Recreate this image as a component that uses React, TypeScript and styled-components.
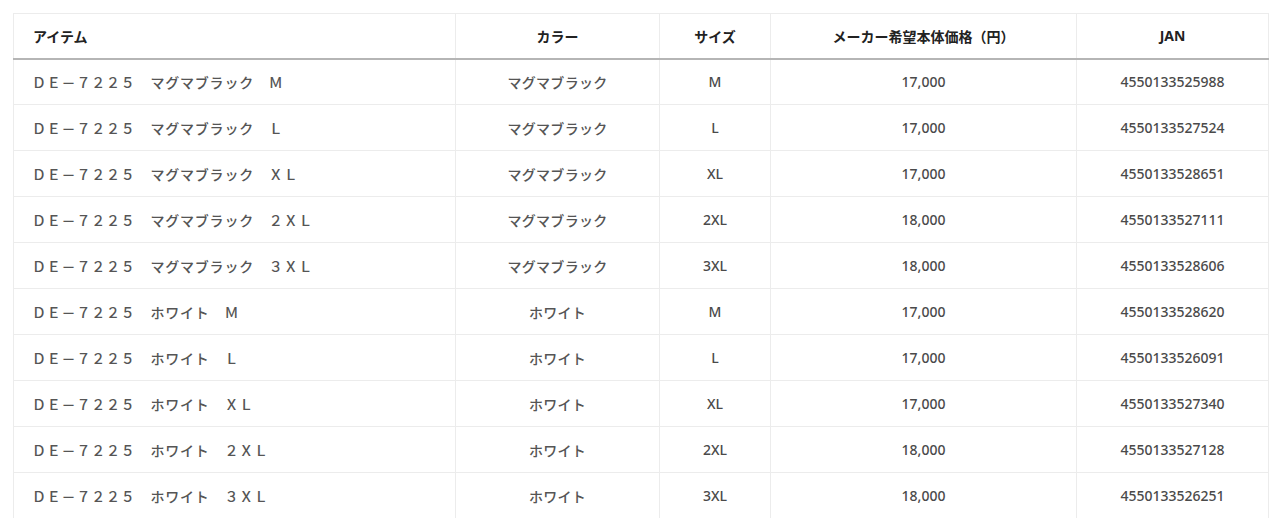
import React from "react";
import styled, { createGlobalStyle } from "styled-components";

const GlobalStyle = createGlobalStyle`
  html, body {
    margin: 0;
    padding: 0;
    background: #ffffff;
  }
  body {
    font-family: "Noto Sans", "Noto Sans CJK JP", sans-serif;
    color: #444;
  }
`;

const Page = styled.div`
  padding: 13px 12px 0 13px;
`;

const Table = styled.table`
  width: 1255px;
  border-collapse: collapse;
  table-layout: fixed;
  border: 1px solid #ececec;
`;

const HeadCell = styled.th<{ $align?: "left" | "center"; $w: number }>`
  width: ${(p) => p.$w}px;
  height: 45px;
  padding: 0 0 0 ${(p) => (p.$align === "left" ? "19px" : "0")};
  text-align: ${(p) => p.$align ?? "center"};
  font-family: "Noto Sans", "Noto Sans CJK JP", sans-serif;
  font-size: 14px;
  font-weight: 700;
  color: #222;
  border-left: 1px solid #ececec;
  border-bottom: 2px solid #b5b5b5;
  box-sizing: border-box;
`;

const Row = styled.tr`
  height: 46px;
`;

const Cell = styled.td<{ $align?: "left" | "center" }>`
  padding: 0 0 0 ${(p) => (p.$align === "left" ? "18px" : "0")};
  text-align: ${(p) => p.$align ?? "center"};
  font-family: "Noto Sans", "Noto Sans CJK JP", sans-serif;
  font-size: 14px;
  font-weight: 500;
  color: #4a4a4a;
  border-left: 1px solid #ececec;
  border-bottom: 1px solid #ececec;
  white-space: nowrap;
`;

const Jp = styled.span<{ $spacing?: number }>`
  font-family: "Noto Sans CJK JP", sans-serif;
  font-size: 14px;
  color: #555;
  letter-spacing: ${(p) => p.$spacing ?? 0.3}px;
`;

type Item = { color: string; size: string; fwSize: string; price: string; jan: string };

const rows: Item[] = [
  { color: "マグマブラック", size: "M", fwSize: "Ｍ", price: "17,000", jan: "4550133525988" },
  { color: "マグマブラック", size: "L", fwSize: "Ｌ", price: "17,000", jan: "4550133527524" },
  { color: "マグマブラック", size: "XL", fwSize: "ＸＬ", price: "17,000", jan: "4550133528651" },
  { color: "マグマブラック", size: "2XL", fwSize: "２ＸＬ", price: "18,000", jan: "4550133527111" },
  { color: "マグマブラック", size: "3XL", fwSize: "３ＸＬ", price: "18,000", jan: "4550133528606" },
  { color: "ホワイト", size: "M", fwSize: "Ｍ", price: "17,000", jan: "4550133528620" },
  { color: "ホワイト", size: "L", fwSize: "Ｌ", price: "17,000", jan: "4550133526091" },
  { color: "ホワイト", size: "XL", fwSize: "ＸＬ", price: "17,000", jan: "4550133527340" },
  { color: "ホワイト", size: "2XL", fwSize: "２ＸＬ", price: "18,000", jan: "4550133527128" },
  { color: "ホワイト", size: "3XL", fwSize: "３ＸＬ", price: "18,000", jan: "4550133526251" },
];

export default function App() {
  return (
    <>
      <GlobalStyle />
      <Page>
        <Table>
          <thead>
            <tr>
              <HeadCell $align="left" $w={442}>アイテム</HeadCell>
              <HeadCell $w={204}>カラー</HeadCell>
              <HeadCell $w={111}>サイズ</HeadCell>
              <HeadCell $w={306}>メーカー希望本体価格（円）</HeadCell>
              <HeadCell $w={192}>JAN</HeadCell>
            </tr>
          </thead>
          <tbody>
            {rows.map((r) => (
              <Row key={r.jan}>
                <Cell $align="left">
                  <Jp $spacing={0.8}>ＤＥ－７２２５　{r.color}　{r.fwSize}</Jp>
                </Cell>
                <Cell>
                  <Jp>{r.color}</Jp>
                </Cell>
                <Cell>{r.size}</Cell>
                <Cell>{r.price}</Cell>
                <Cell>{r.jan}</Cell>
              </Row>
            ))}
          </tbody>
        </Table>
      </Page>
    </>
  );
}
